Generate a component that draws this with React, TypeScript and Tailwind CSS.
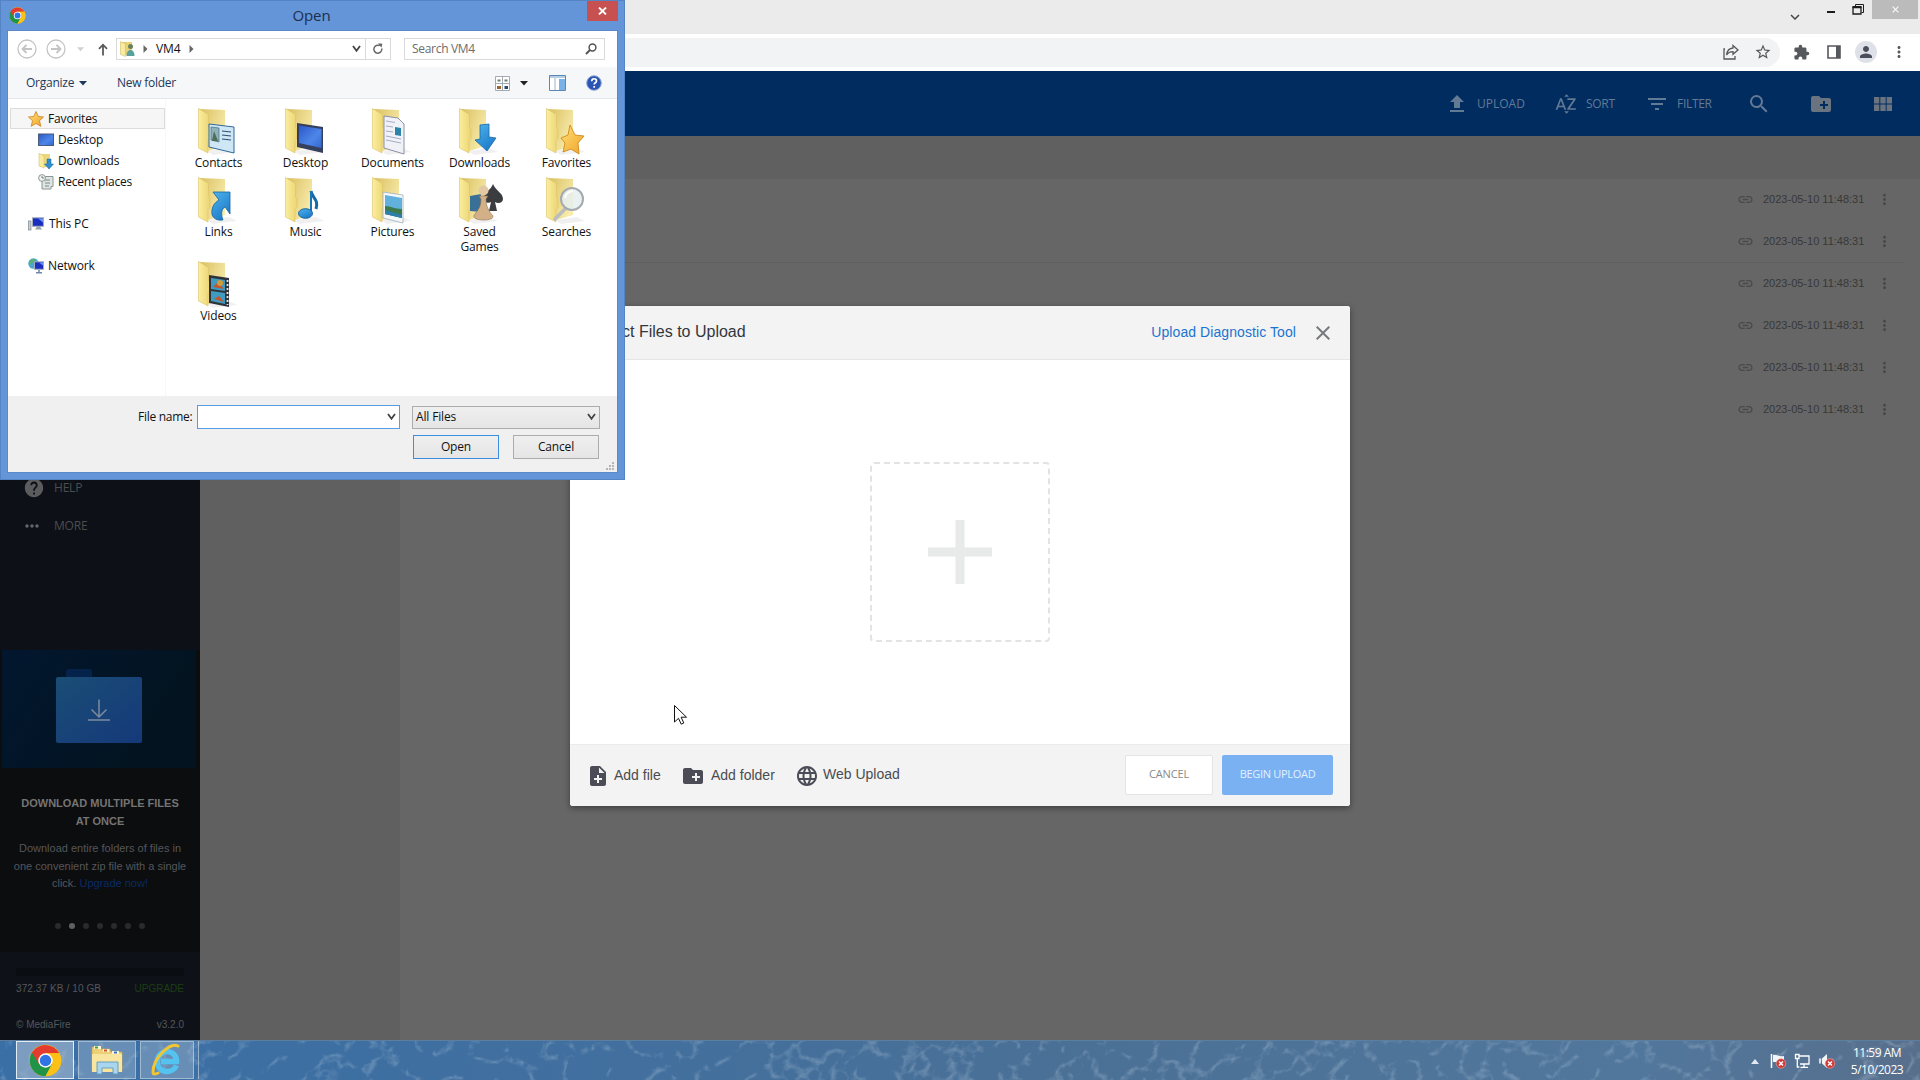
import React from "react";
import {
  MdUpload, MdSortByAlpha, MdFilterList, MdSearch, MdCreateNewFolder, MdViewModule, MdHelp,
  MdMoreHoriz, MdMoreVert, MdLink, MdNoteAdd, MdLanguage, MdExtension, MdPerson, MdStarBorder,
  MdExpandMore, MdClose,
} from "react-icons/md";

const UI = "font-['Open_Sans','Noto_Sans',sans-serif]";
const ARIAL = "font-['Liberation_Sans',Arial,sans-serif]";

function ChromeLogo({ size }: { size: number }) {
  return (
    <svg width={size} height={size} viewBox="0 0 48 48" className="shrink-0">
      <circle cx="24" cy="24" r="23" fill="#fbc116" />
      <path d="M24 24 L4.1 12.5 A23 23 0 0 0 24 47 L34 29.5 Z" fill="#1f9447" />
      <path d="M24 13.5 H43.9 A23 23 0 0 0 4.1 12.5 L14.9 29.3 Z" fill="#e33b2e" />
      <path d="M24 47 A23 23 0 0 0 43.9 13.5 H24 L33.1 29.3 Z" fill="#fbc116" />
      <circle cx="24" cy="24" r="10.5" fill="#fff" />
      <circle cx="24" cy="24" r="8.3" fill="#2f74e4" />
    </svg>
  );
}

/* ---------- browser window behind the dialogs ---------- */

function BrowserChrome() {
  return (
    <div className="flex h-[71px] flex-col bg-white">
      <div className="flex h-[34px] justify-end bg-[#ebebeb] text-[#1c1c1c]">
        <MdExpandMore className="mt-[8px] mr-[20px] size-[18px] text-[#444]" />
        <svg width="14" height="16" viewBox="0 0 14 16" className="mr-[13px]">
          <path d="M3 12h8" stroke="currentColor" strokeWidth="2" />
        </svg>
        <svg width="14" height="18" viewBox="0 0 14 18" className="mr-[7px]" fill="none" stroke="currentColor">
          <path d="M4.500 6.500V4.500H12.500V12.500H10.500" />
          <path d="M2 7.500h8v6.500h-8z" strokeWidth="1.300" />
          <path d="M1.500 7h9" strokeWidth="2" />
        </svg>
        <div className="mr-[2px] flex h-[19px] w-[46px] items-center justify-center bg-[#bbb]">
          <MdClose className="size-[11px] text-white" />
        </div>
      </div>
      <div className="flex h-[36px] items-center justify-end text-[#55585c]">
        <div className="flex h-[29px] flex-1 items-center justify-end rounded-r-full bg-[#f1f3f4] pr-[8px]">
          <svg width="18" height="18" viewBox="0 0 18 18" fill="none" stroke="currentColor" strokeWidth="1.300" className="mr-[14px]">
            <path d="M3 6H2v10h11v-3" />
            <path d="M11 2.500l5 4.500-5 4.300V8.700C8 8.700 6 9.700 4.600 12 5 8.500 7 5.300 11 5z" />
          </svg>
          <MdStarBorder className="size-[18px]" />
        </div>
        <div className="flex items-center pl-[13px] pr-[12px]">
          <MdExtension className="size-[17px]" />
          <svg width="16" height="16" viewBox="0 0 16 16" className="ml-[16px]">
            <path d="M2 2h12v12H2z" fill="none" stroke="currentColor" strokeWidth="1.600" />
            <path d="M10 2h4v12h-4z" fill="currentColor" />
          </svg>
          <span className="ml-[13px] flex size-[22px] items-center justify-center rounded-full bg-[#dee2e8]">
            <MdPerson className="size-[18px] text-[#4b4f5c]" />
          </span>
          <MdMoreVert className="ml-[13px] size-[18px]" />
        </div>
      </div>
    </div>
  );
}

function AppHeader() {
  return (
    <div className="flex h-[65px] items-center justify-end bg-[#002c60] pt-px text-[12px] text-[#637a95]">
      <div className="flex w-[109px] items-center gap-[8px]"><MdUpload className="size-6" /><span>UPLOAD</span></div>
      <div className="flex w-[91px] items-center gap-[8px]"><MdSortByAlpha className="size-6" /><span className="tracking-[-0.3px]">SORT</span></div>
      <div className="flex w-[102px] items-center gap-[8px]"><MdFilterList className="size-6" /><span className="tracking-[-0.3px]">FILTER</span></div>
      <div className="w-[62px]"><MdSearch className="size-6" /></div>
      <div className="w-[62px]"><MdCreateNewFolder className="size-6 text-[#6a7480]" /></div>
      <div className="w-[49px]"><MdViewModule className="size-6 text-[#6a7480]" /></div>
    </div>
  );
}

function Sidebar() {
  return (
    <div className={`flex w-[200px] flex-col bg-[#0d1016] pt-[338px] text-[#4b4d50] ${UI}`}>
      <div className="flex h-[28px] items-center pl-[23px] text-[12px]">
        <MdHelp className="size-[22px] text-[#5b5c5e]" /><span className="ml-[9px] tracking-[-0.200px]">HELP</span>
      </div>
      <div className="mt-[10px] flex h-[28px] items-center pl-[22px] text-[12px]">
        <MdMoreHoriz className="size-[20px] text-[#66676a]" /><span className="ml-[12px] tracking-[-0.200px]">MORE</span>
      </div>
      <div className={`mt-[110px] flex h-[302px] flex-col items-center bg-[#0c0d0f] text-center ${ARIAL}`}>
        <svg width="194" height="118" viewBox="0 0 194 118" className="mr-[2px] shrink-0">
          <defs>
            <linearGradient id="promoBack" x1="0" y1="0" x2="1" y2="0.400">
              <stop offset="0" stopColor="#02172f" /><stop offset="1" stopColor="#03131f" />
            </linearGradient>
            <linearGradient id="promoFolder" x1="0" y1="0" x2="1" y2="1">
              <stop offset="0" stopColor="#1a4d75" /><stop offset="1" stopColor="#15397a" />
            </linearGradient>
          </defs>
          <rect width="194" height="118" fill="url(#promoBack)" />
          <path d="M64 22q0-3 3-3h20q3 0 3 3v6H64z" fill="#04224a" />
          <rect x="54" y="27" width="86" height="66" rx="2" fill="url(#promoFolder)" />
          <path d="M97 49.500v17M89.500 59.500l7.500 7.500 7.500-7.500M86 70h22" fill="none" stroke="#7d8b9d" strokeWidth="1.500" />
        </svg>
        <div className="mt-[26px] text-[11px] font-bold leading-[18px] text-[#747474]">DOWNLOAD MULTIPLE FILES<br />AT ONCE</div>
        <div className="mt-[10px] whitespace-nowrap text-[11px] leading-[17.500px] text-[#55565a]">
          Download entire folders of files in<br />one convenient zip file with a single<br />click. <span className="text-[#0a2b66]">Upgrade now!</span>
        </div>
        <div className="mt-[30px] flex gap-[8px]">
          {[0, 1, 2, 3, 4, 5, 6].map((i) => (
            <span key={i} className={`size-[6px] rounded-full ${i === 1 ? "bg-[#606060]" : "bg-[#2a2b2d]"}`} />
          ))}
        </div>
      </div>
      <div className={`flex flex-1 flex-col bg-[#0e1218] px-[16px] text-[10px] text-[#55575b] ${ARIAL}`}>
        <div className="mt-[16px] h-[8px] bg-[#0a0d11]" />
        <div className="mt-[4px] flex h-[16px] items-center justify-between">
          <span className="tracking-[0.100px]">372.37 KB / 10 GB</span><span className="text-[#1c3d13]">UPGRADE</span>
        </div>
        <div className="mt-[20px] flex h-[16px] items-center justify-between">
          <span>© MediaFire</span><span>v3.2.0</span>
        </div>
      </div>
    </div>
  );
}

function FileRows() {
  return (
    <div className="flex flex-1 flex-col bg-[#666]">
      {[0, 1, 2, 3, 4, 5].map((i) => (
        <div key={i} className={`mr-[15px] flex h-[42px] items-center justify-end text-[11px] text-[#383838] ${i === 1 ? "border-b border-[#5f5f5f]" : "pb-[2px]"} ${ARIAL}`}>
          <MdLink className="size-[17px] text-[#4a4a4a]" />
          <span className="ml-[9px] w-[102px] whitespace-nowrap">2023-05-10 11:48:31</span>
          <MdMoreVert className="ml-[11px] mr-[12px] size-[17px] text-[#474747]" />
        </div>
      ))}
    </div>
  );
}

/* ---------- upload dialog ---------- */

function UploadDialog() {
  return (
    <div className={`absolute left-[570px] top-[306px] flex h-[500px] w-[780px] flex-col overflow-hidden rounded-[3px] bg-white shadow-[0_2px_6px_rgba(0,0,0,0.4)] ${ARIAL}`}>
      <div className="flex h-[54px] items-center justify-between border-b border-[#e6e6e6] bg-[#f3f3f3] pl-[20px] pr-[15px]">
        <span className="pb-[2px] text-[16px] text-[#33363b]">Select Files to Upload</span>
        <span className="flex items-center">
          <span className="text-[14px] tracking-[0.080px] text-[#1a73d0]">Upload Diagnostic Tool</span>
          <MdClose className="ml-[15px] size-[24px] text-[#77797c]" />
        </span>
      </div>
      <div className="flex flex-1 items-center justify-center">
        <div className="flex size-[180px] items-center justify-center rounded-[4px] border-2 border-dashed border-[#e3e3e3]">
          <svg width="66" height="66" viewBox="0 0 66 66">
            <path d="M33 1v64M1 33h64" stroke="#e8eaea" strokeWidth="9" />
          </svg>
        </div>
      </div>
      <div className="flex h-[62px] items-center border-t border-[#ebebeb] bg-[#f3f3f3] pl-[16px] pr-[17px] text-[14px] text-[#4a4c50]">
        <MdNoteAdd className="size-[24px] text-[#4b4c55]" /><span className="ml-[4px] w-[67px]">Add file</span>
        <MdCreateNewFolder className="size-[24px] text-[#4b4c55]" /><span className="ml-[6px] w-[84px] whitespace-nowrap">Add folder</span>
        <MdLanguage className="size-[24px] text-[#4b4c55]" /><span className="ml-[4px] flex-1 pb-[2px]">Web Upload</span>
        <button className={`mb-[2px] h-[40px] w-[88px] rounded-[2px] border border-[#e4e4e4] bg-white text-[11px] tracking-[-0.150px] text-[#8a8a8a] ${UI}`}>CANCEL</button>
        <button className={`mb-[2px] ml-[9px] h-[40px] w-[111px] rounded-[2px] bg-[#7ab1f3] text-[11px] tracking-[-0.300px] text-[#e4f0fe] ${UI}`}>BEGIN UPLOAD</button>
      </div>
    </div>
  );
}

/* ---------- system file picker ---------- */

const ART: Record<string, React.ReactNode> = {
  Contacts: (
    <g>
      <path d="M11 16l25 3v26l-25-6z" fill="#cfe6f4" stroke="#2f6a9c" strokeWidth="1" />
      <path d="M13 19l8 1v14l-8-2z" fill="#8fb2b8" stroke="#3e6d84" strokeWidth="0.700" />
      <path d="M16 23l2 5 2 5h-6z" fill="#4f6d57" />
      <path d="M24 23l9 1M24 27l9 1M24 31l9 1" stroke="#2c4f75" strokeWidth="1.200" />
    </g>
  ),
  Desktop: (
    <g>
      <path d="M12 15l26 4v26l-26-6z" fill="#34405c" />
      <path d="M14 17.500l22.500 3.500v19l-22.500-5z" fill="url(#screen)" />
    </g>
  ),
  Documents: (
    <g>
      <path d="M12 8l14 2 6 6v30l-20-6z" fill="#f1f2f8" stroke="#8d90a6" strokeWidth="1" />
      <path d="M14 13l9 1.500M14 18l7 1M14 23l7 1M14 28l15 3M14 32l15 3" stroke="#a8abc4" />
      <path d="M23 19l6 1v8l-6-1z" fill="#2d83a8" />
    </g>
  ),
  Downloads: <path d="M21 17l9-1v13l7 1-9 13-12-11 5-1z" fill="url(#blueArrow)" stroke="#1668a8" strokeWidth="0.800" />,
  Favorites: <path d="M24 17l5 10 9 1-6 7 1 11-8-5-8 3 2-9-4-5 7-3z" fill="url(#gold)" stroke="#cf8a1c" strokeWidth="0.900" />,
  Links: <path d="M15 15h17v22l-5-7c-4 2-4 8-2 13-9 1-12-4-11-10 1-6 4-8 7-10z" fill="url(#blueArrow)" stroke="#17649e" strokeWidth="0.800" />,
  Music: (
    <g>
      <path d="M26 14c1 7 8 8 5 18" fill="none" stroke="#1569a8" strokeWidth="3" />
      <path d="M26 14v23" stroke="#1b74b8" strokeWidth="2" />
      <ellipse cx="20.500" cy="36.500" rx="7" ry="4.800" fill="url(#blueArrow)" stroke="#17649e" />
    </g>
  ),
  Pictures: (
    <g>
      <path d="M11 15l20 3v28l-20-5z" fill="#f5f8fa" stroke="#9fb0b8" strokeWidth="0.800" />
      <path d="M13 18l17 3v20l-17-4z" fill="#62b0dc" />
      <path d="M13 29c6 0 9 3 17 3v9l-17-4z" fill="#3d7b4f" />
      <path d="M13 33l17 5v3l-17-4z" fill="#2d7fae" />
    </g>
  ),
  "Saved Games": (
    <g>
      <path d="M11 19l11-2v18l-11-1z" fill="#3a6f96" />
      <path d="M34 7c3 7 10 9 10 15 0 4-5 5-8 3l2 9h-8l2-9c-3 2-7 0-7-4 0-6 7-8 9-14z" fill="#3b3c40" />
      <circle cx="24.500" cy="13.500" r="5" fill="#e3c9a3" />
      <path d="M20 19h9l-2 3c0 8 3 11 5 15 4 2 2 6-7 6s-12-3-9-6c3-4 6-7 6-15z" fill="#d3b188" stroke="#8f6d48" strokeWidth="0.600" />
    </g>
  ),
  Searches: (
    <g>
      <path d="M19 32L9 42" stroke="#b9bdbf" strokeWidth="3.500" strokeLinecap="round" />
      <circle cx="26" cy="22" r="11" fill="#e6eeee" fillOpacity="0.850" stroke="#a4aab0" strokeWidth="2" />
      <path d="M19 21a8 8 0 0 1 8-7" stroke="#fff" strokeWidth="2" fill="none" />
    </g>
  ),
  Videos: (
    <g>
      <path d="M11 14l20 3v29l-20-4z" fill="#30343a" />
      <path d="M13 17l14 2v11l-14-2zM13 30l14 2v11l-14-3z" fill="#3d9cc0" />
      <path d="M15 26l5-5 6 7zM16 38l5-3 5 6z" fill="#c5552e" />
      <circle cx="22" cy="22" r="3" fill="#d39b37" />
      <path d="M29.500 19v25" stroke="#e8e8e8" strokeWidth="1.800" strokeDasharray="2 2" />
    </g>
  ),
};

function Defs() {
  return (
    <svg width="0" height="0" className="absolute">
      <defs>
        <linearGradient id="flap" x1="0" x2="1"><stop offset="0" stopColor="#fbee9f" /><stop offset="1" stopColor="#ecd472" /></linearGradient>
        <linearGradient id="back" x1="0" x2="1" y2="0.600"><stop offset="0" stopColor="#d9be60" /><stop offset="1" stopColor="#f8ecab" /></linearGradient>
        <linearGradient id="screen" x1="0" x2="1" y2="1"><stop offset="0" stopColor="#2b57c8" /><stop offset="0.600" stopColor="#4d86e8" /><stop offset="1" stopColor="#3567d0" /></linearGradient>
        <linearGradient id="blueArrow" x1="0" y1="0" x2="0.600" y2="1"><stop offset="0" stopColor="#4fb4ec" /><stop offset="1" stopColor="#1d7ccb" /></linearGradient>
        <linearGradient id="gold" x1="0" y1="0" x2="1" y2="1"><stop offset="0" stopColor="#ffe27a" /><stop offset="1" stopColor="#f0a125" /></linearGradient>
      </defs>
    </svg>
  );
}

function FolderItem({ name }: { name: string }) {
  return (
    <div className="flex flex-col items-center pb-[7px]">
      <svg width="46" height="47" viewBox="0 0 46 47" className="ml-[5px] shrink-0">
        <path d="M9 43l22-3 8 4-24 3z" fill="#000" opacity="0.060" />
        <path d="M1 1l26 1v36l-17 5z" fill="url(#back)" />
        <path d="M0.500 0.500l10 6v13l1.500 2v9l-2 2V45L0.500 40z" fill="url(#flap)" stroke="#dcc266" strokeWidth="0.600" />
        {ART[name]}
      </svg>
      <span className="w-[64px] text-center leading-[15px]">{name}</span>
    </div>
  );
}

const FILES = ["Contacts", "Desktop", "Documents", "Downloads", "Favorites", "Links", "Music", "Pictures", "Saved Games", "Searches", "Videos"];

function Caret({ className }: { className?: string }) {
  return <svg width="8" height="5" viewBox="0 0 8 5" className={className}><path d="M0 0h8L4 4.500z" fill="currentColor" /></svg>;
}

function Chevron({ className }: { className?: string }) {
  return <svg width="9" height="8" viewBox="0 0 9 8" className={className}><path d="M1 1l3.500 4.800L8 1" fill="none" stroke="#444" strokeWidth="1.800" /></svg>;
}

function NavPane() {
  return (
    <div className="flex w-[158px] flex-col border-r border-[#f7f7f7] pt-[9px]">
      <div className="ml-[2px] flex h-[21px] items-center border border-[#dcdcdc] bg-[#f6f6f6] pl-[17px]">
        <svg width="16" height="16" viewBox="0 0 16 16"><path d="M8 0.500l2.300 5 5.200.5-4 3.700 1.300 5.600L8 12.500l-4.800 2.800 1.300-5.600-4-3.700 5.200-.5z" fill="url(#gold)" stroke="#c88222" strokeWidth="0.800" /></svg>
        <span className="ml-[4px]">Favorites</span>
      </div>
      <div className="flex h-[21px] items-center pl-[30px]">
        <svg width="16" height="14" viewBox="0 0 16 14"><rect x="0.500" y="1" width="15" height="11.500" fill="url(#screen)" stroke="#4b5b7a" /></svg>
        <span className="ml-[4px]">Desktop</span>
      </div>
      <div className="flex h-[21px] items-center pl-[30px]">
        <svg width="16" height="16" viewBox="0 0 16 16"><path d="M2 1h10v13H2z" fill="#ecd77e" /><path d="M1 0l5 3v12l-5-2z" fill="#f8eba0" stroke="#d3b95d" strokeWidth="0.500" /><path d="M9 6h4v5h2.500L11 16 6.500 11H9z" fill="#2d8fd0" stroke="#1b659c" strokeWidth="0.500" /></svg>
        <span className="ml-[4px]">Downloads</span>
      </div>
      <div className="flex h-[21px] items-center pl-[30px]">
        <svg width="16" height="16" viewBox="0 0 16 16"><path d="M4 2.500h11v10h-2v2.500H4z" fill="#dfe5e3" stroke="#8b9694" /><path d="M7 6h5M7 9h5M7 12h4" stroke="#7d8886" /><circle cx="4" cy="4" r="3.400" fill="#f1f4f3" stroke="#8b9694" /><path d="M4 2v2h2" fill="none" stroke="#5c6664" strokeWidth="0.800" /></svg>
        <span className="ml-[4px] tracking-[-0.200px]">Recent places</span>
      </div>
      <div className="mt-[21px] flex h-[21px] items-center pl-[20px]">
        <svg width="16" height="14" viewBox="0 0 16 14"><rect x="0.500" y="4" width="2.500" height="9" fill="#c9d0d4" stroke="#7c868c" strokeWidth="0.700" /><rect x="4.500" y="0.800" width="11" height="8.500" fill="#1a2fc0" stroke="#a3adbb" /><path d="M10 1.500h5v4z" fill="#6e95f0" /><path d="M7 12.500h7l-2-3H9z" fill="#9aa3a9" /></svg>
        <span className="ml-[5px]">This PC</span>
      </div>
      <div className="mt-[21px] flex h-[21px] items-center pl-[20px]">
        <svg width="16" height="16" viewBox="0 0 16 16"><circle cx="5.500" cy="5.500" r="5.200" fill="#4aa6d6" /><path d="M1 4c3-4 5-2 6-3 1 3-3 2-3 5-1 2-3 0-3-2z" fill="#59b26b" /><rect x="6.500" y="3.800" width="9" height="7.500" fill="#1a2fc0" stroke="#a3adbb" /><path d="M11 4.500h4v3z" fill="#6e95f0" /><path d="M8 14.800h6M11 12v3" stroke="#6f87a8" strokeWidth="1.500" /></svg>
        <span className="ml-[4px]">Network</span>
      </div>
    </div>
  );
}

function OpenDialog() {
  return (
    <div className={`absolute left-0 top-0 flex h-[480px] w-[625px] flex-col border border-[#5484c4] bg-[#6495d9] px-[6px] pb-[6px] text-[12px] tracking-[-0.150px] text-[#111] ${UI}`}>
      <div className="flex h-[29px] items-start">
        <div className="mt-[6px] ml-[2px]"><ChromeLogo size={17} /></div>
        <span className="mt-[4px] flex-1 pl-[10px] text-center text-[15px] leading-[20px] text-[#1c2f4d]">Open</span>
        <div className="flex h-[20px] w-[31px] items-center justify-center bg-[#c75050] text-white">
          <svg width="9" height="8" viewBox="0 0 9 8"><path d="M1 0.500l7 7M8 0.500l-7 7" stroke="currentColor" strokeWidth="1.800" /></svg>
        </div>
      </div>
      <div className="flex flex-1 flex-col border border-[#5b8acb] bg-white">
        <div className="flex h-[36px] items-center pl-[9px] pr-[12px]">
          <svg width="20" height="20" viewBox="0 0 20 20" fill="none" stroke="#c4c4c4"><circle cx="10" cy="10" r="9" strokeWidth="1.300" /><path d="M15 10H6M9.500 6L5.500 10l4 4" strokeWidth="1.800" /></svg>
          <svg width="20" height="20" viewBox="0 0 20 20" fill="none" stroke="#c4c4c4" className="ml-[9px]"><circle cx="10" cy="10" r="9" strokeWidth="1.300" /><path d="M5 10h9M10.500 6l4 4-4 4" strokeWidth="1.800" /></svg>
          <Caret className="ml-[11px] w-[7px] text-[#d0d0d0]" />
          <svg width="10" height="13" viewBox="0 0 10 13" className="ml-[14px]"><path d="M5 12.500V2M1 5.800L5 1.700l4 4.100" fill="none" stroke="#5a5a5a" strokeWidth="1.800" /></svg>
          <div className="ml-[8px] flex h-[22px] w-[275px] items-center border border-[#d9d9d9] pl-[3px]">
            <svg width="16" height="16" viewBox="0 0 16 16"><path d="M1 1h11v13H1z" fill="#e8d277" /><path d="M0.500 0.500l5 2.500v12.500l-5-2z" fill="#f8eba0" stroke="#cdb35c" strokeWidth="0.500" /><circle cx="10.500" cy="5.500" r="2.500" fill="#6d7f5a" /><path d="M6.500 15c0-8 8-8 8 0z" fill="#57a09c" /></svg>
            <svg width="5" height="8" viewBox="0 0 5 8" className="ml-[7px]"><path d="M0.500 0l4 4-4 4z" fill="#666" /></svg>
            <span className="ml-[8px] w-[24px]">VM4</span>
            <svg width="5" height="8" viewBox="0 0 5 8" className="ml-[9px]"><path d="M0.500 0l4 4-4 4z" fill="#666" /></svg>
            <Chevron className="ml-auto mr-[4px]" />
            <span className="flex h-full w-[25px] items-center justify-center border-l border-[#d9d9d9]">
              <svg width="12" height="12" viewBox="0 0 12 12"><path d="M9.800 5.500a4 4 0 1 1-2-2.800" fill="none" stroke="#666" strokeWidth="1.500" /><path d="M6 0.300l4.300 0.500-0.800 4z" fill="#666" /></svg>
            </span>
          </div>
          <div className="ml-[13px] flex h-[22px] flex-1 items-center border border-[#d9d9d9] pl-[7px] pr-[7px] text-[#6c6c6c]">
            <span className="flex-1 tracking-[-0.300px]">Search VM4</span>
            <svg width="12" height="12" viewBox="0 0 12 12"><circle cx="7.500" cy="4.500" r="3.400" fill="none" stroke="#555" strokeWidth="1.500" /><path d="M5 7L1 11" stroke="#555" strokeWidth="2" /></svg>
          </div>
        </div>
        <div className="flex h-[32px] items-center border-b border-[#e4e7ea] bg-[#f5f7f8] pt-px pl-[18px] pr-[15px] text-[#1e395b]">
          <span className="w-[47px] tracking-[-0.250px]">Organize</span><Caret className="ml-[6px]" />
          <span className="ml-[30px] flex-1 tracking-[-0.250px]">New folder</span>
          <svg width="15" height="15" viewBox="0 0 15 15"><path d="M0.500 0.500h14v14H.5zM7.500 0v15M0 7.500h15" fill="#fff" stroke="#98a2ad" strokeWidth="0.900" /><path d="M2.500 4.500h3M9.500 4.500h3" stroke="#6f7f76" strokeWidth="2" /><path d="M2 10h4v3H2z" fill="#a0622f" /><path d="M9.500 10h3.500v3H9.500z" fill="#2a4a6f" /></svg>
          <Caret className="ml-[10px] text-[#222]" />
          <svg width="17" height="16" viewBox="0 0 17 16" className="ml-[21px]"><path d="M0.500 0.500h16v15H.5z" fill="#fff" stroke="#5c87b0" /><path d="M1 1h15v2H1z" fill="#b7cfe6" /><path d="M6 3v12" stroke="#9db4c9" /><path d="M10 4h6v11h-6z" fill="#78b4e8" /></svg>
          <svg width="16" height="16" viewBox="0 0 16 16" className="ml-[20px]"><circle cx="8" cy="8" r="7.300" fill="#2a55b5" stroke="#8fa8d4" /><path d="M5.700 6.200c0-3.200 4.800-3.200 4.800-.3 0 2-2.300 1.800-2.300 3.600M8.200 11v1.800" fill="none" stroke="#fff" strokeWidth="1.700" /></svg>
        </div>
        <div className="flex h-[297px]">
          <NavPane />
          <div className="grid auto-rows-min grid-cols-[repeat(5,87px)] pl-[9px] pt-[9px]">
            {FILES.map((f) => <FolderItem key={f} name={f} />)}
          </div>
        </div>
        <div className="relative flex flex-1 flex-col bg-[#f0f0f0] pl-[130px] pt-[9px]">
          <div className="flex h-[24px] items-center">
            <span className="w-[59px] whitespace-nowrap tracking-[-0.280px]">File name:</span>
            <div className="flex h-[24px] w-[203px] items-center justify-end border border-[#569de5] bg-white pr-[3px]"><Chevron /></div>
            <div className="ml-[12px] flex h-[23px] w-[188px] items-center justify-between border border-[#acacac] bg-gradient-to-b from-[#efefef] to-[#e5e5e5] pl-[3px] pr-[3px]"><span>All Files</span><Chevron /></div>
          </div>
          <div className="mt-[6px] flex pl-[275px]">
            <button className="h-[24px] w-[86px] border border-[#3c8fe0] bg-gradient-to-b from-[#efefef] to-[#e5e5e5]">Open</button>
            <button className="ml-[14px] h-[24px] w-[86px] border border-[#acacac] bg-gradient-to-b from-[#efefef] to-[#e5e5e5]">Cancel</button>
          </div>
          <svg width="9" height="9" viewBox="0 0 9 9" className="absolute bottom-[1px] right-[2px]" fill="#b5b5b5"><path d="M6 0h2v2H6zM3 3h2v2H3zM6 3h2v2H6zM0 6h2v2H0zM3 6h2v2H3zM6 6h2v2H6z" /></svg>
        </div>
      </div>
    </div>
  );
}

/* ---------- taskbar ---------- */

function ErrorBadge({ x, y }: { x: number; y: number }) {
  return (
    <g>
      <circle cx={x} cy={y} r="4.800" fill="#cf3b3b" stroke="#e9a7a7" strokeWidth="0.600" />
      <path d={`M${x - 2} ${y - 2}l4 4M${x + 2} ${y - 2}l-4 4`} stroke="#fff" strokeWidth="1.400" />
    </g>
  );
}

function Taskbar() {
  return (
    <div className="relative flex h-[40px] items-center overflow-hidden bg-[#46719f]">
      <svg width="1920" height="40" className="absolute left-0 top-0">
        <defs>
          <filter id="water" x="0" y="0" width="100%" height="100%">
            <feTurbulence type="turbulence" baseFrequency="0.030 0.035" numOctaves="4" seed="11" />
            <feColorMatrix values="0 0 0 0 0.600  0 0 0 0 0.720  0 0 0 0 0.820  -3.200 0 0 0 0.750" />
          </filter>
          <linearGradient id="sea" x1="0" x2="1">
            <stop offset="0" stopColor="#3a6fa6" /><stop offset="0.300" stopColor="#416f9f" />
            <stop offset="0.550" stopColor="#4a7096" /><stop offset="0.850" stopColor="#51779d" /><stop offset="1" stopColor="#586f8c" />
          </linearGradient>
        </defs>
        <rect width="1920" height="40" fill="url(#sea)" />
        <g transform="rotate(-35 960 20)">
          <rect x="0" y="-700" width="1920" height="1440" filter="url(#water)" opacity="0.420" />
        </g>
        <path d="M0 0.500h1920" stroke="#5d7f9f" />
      </svg>
      <div className="relative ml-[16px] flex h-[38px] w-[58px] items-center justify-center border border-[#e3edf6] bg-[#a9bcd0]/60"><ChromeLogo size={33} /></div>
      <div className="relative ml-[4px] flex h-[38px] w-[58px] items-center justify-center border border-[#b9cde0]/70 bg-[#9db4cc]/45">
        <svg width="34" height="30" viewBox="0 0 34 30">
          <path d="M2 2h8l1 2h9l1 3h11v19H2z" fill="#edcf75" stroke="#c7a347" strokeWidth="0.700" />
          <path d="M4 1h7v3H4z" fill="#fff6cf" /><path d="M5 1.500h3v2H5z" fill="#3aa04a" /><path d="M13 4h6v3h-6z" fill="#fff6cf" /><path d="M14 4.500h3v2h-3z" fill="#d1502c" /><path d="M22 6h7v3h-7z" fill="#fff6cf" /><path d="M24 6.500h3v2h-3z" fill="#3a6fc0" />
          <path d="M2 9h30v18H2z" fill="#f8e6a0" /><path d="M7 29v-12h21v12h-5v-6H12v6z" fill="#a9d5ee" stroke="#5b9ac4" strokeWidth="0.900" />
        </svg>
      </div>
      <div className="relative ml-[4px] flex h-[38px] w-[54px] items-center justify-center border border-[#b9cde0]/70 bg-[#9db4cc]/45 pr-[2px]">
        <svg width="32" height="34" viewBox="0 0 32 34">
          <path d="M26.500 22.500c-4 9-20 8-19-5C8.500 5.500 27 5.500 26.500 18.500H11" fill="none" stroke="#55c3ef" strokeWidth="5.500" />
          <path d="M28 3C20-1 3 15 3 29c0 3 3 2 5 1" fill="none" stroke="#f2c532" strokeWidth="3" strokeLinecap="round" />
        </svg>
      </div>
      <div className="relative h-[38px] w-[5px] border-r border-[#b9cde0]/70" />
      <div className={`relative ml-auto mr-[16px] flex items-center pt-[2px] text-white ${UI}`}>
        <svg width="8" height="5" viewBox="0 0 8 5" className="mr-[11px]"><path d="M0 5l4-5 4 5z" fill="#dfe9f2" /></svg>
        <svg width="17" height="16" viewBox="0 0 17 16" className="mr-[7px]"><path d="M1.500 1v14" stroke="#fff" strokeWidth="1.500" /><path d="M3 2c4-1 5 2 11 1v6H3z" fill="#f3f6f9" /><ErrorBadge x={11} y={10.500} /></svg>
        <svg width="16" height="16" viewBox="0 0 16 16" className="mr-[9px]" fill="none" stroke="#fff" strokeWidth="1.300"><path d="M5.500 3h9.500v8H6M10 11v3M6.500 14.300h7.500M1.500 1.500h3.500v4H1.500zM3.300 6v8h2" /></svg>
        <svg width="17" height="16" viewBox="0 0 17 16" className="mr-[14px]"><path d="M1 5.500v5" stroke="#fff" strokeWidth="1.500" /><path d="M3 5.500L8 1v14L3 10.500z" fill="#f3f6f9" /><ErrorBadge x={11} y={10.500} /></svg>
        <div className="w-[54px] whitespace-nowrap text-center text-[12px] leading-[17px] tracking-[-0.500px]">11:59 AM<br />5/10/2023</div>
      </div>
    </div>
  );
}

export default function App() {
  return (
    <div className={`relative flex h-[1080px] w-[1920px] flex-col overflow-hidden bg-[#666] ${UI}`}>
      <Defs />
      <BrowserChrome />
      <AppHeader />
      <div className="flex flex-1">
        <Sidebar />
        <div className="flex flex-1 flex-col">
          <div className="h-[43px] bg-[#606060]" />
          <div className="flex flex-1">
            <div className="w-[200px] bg-[#606060]" />
            <FileRows />
          </div>
        </div>
      </div>
      <Taskbar />
      <UploadDialog />
      <OpenDialog />
      <svg width="14" height="21" viewBox="0 0 14 21" className="absolute left-[674px] top-[705px]">
        <path d="M0.500 0.500v16.500l4-3.700 2.700 5.900 2.600-1.200-2.700-5.800h5.400z" fill="#fff" stroke="#111" />
      </svg>
    </div>
  );
}
